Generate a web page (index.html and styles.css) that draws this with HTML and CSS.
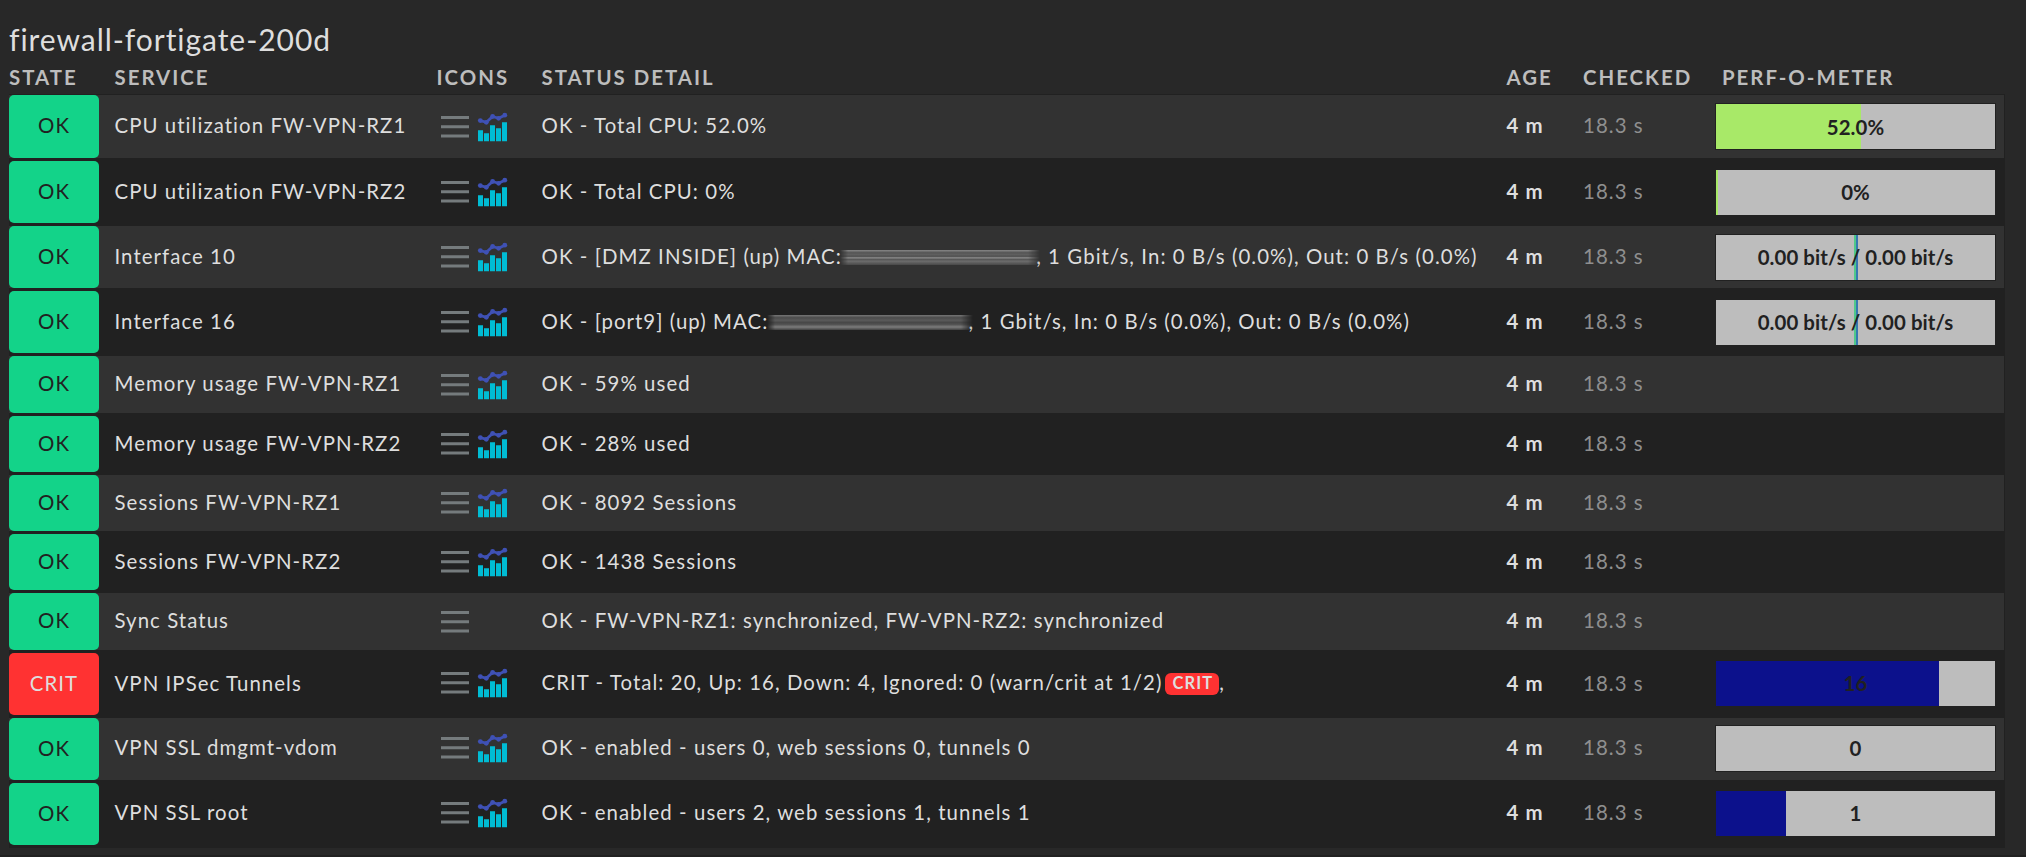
FILE: index.html
```
<!DOCTYPE html>
<html lang="en">
<head>
<meta charset="utf-8">
<title>firewall-fortigate-200d</title>
<link rel="stylesheet" href="styles.css">
</head>
<body>
<svg class="defs" width="0" height="0" aria-hidden="true">
  <symbol id="menu" viewBox="0 0 34 34"><path d="M3 7.5h28M3 16.8h28M3 26h28" stroke="#757b7d" stroke-width="3"/></symbol>
  <symbol id="graph" viewBox="0 0 34 34">
    <path d="M2 20.2h5v11H2zM8 23.2h5v8H8zM14 15.2h5v16h-5zM20 18.2h5v13h-5zM26 12.2h5v19h-5z" fill="#00bcd4"/>
    <path d="M4.3 10.6 10.3 12.3 16.6 6.5 22.6 8.3 28.8 5.2" fill="none" stroke="#3f51b5" stroke-width="2.8"/>
    <g fill="#3f51b5"><circle cx="4.3" cy="10.6" r="2.4"/><circle cx="10.3" cy="12.3" r="2.4"/><circle cx="16.6" cy="6.5" r="2.4"/><circle cx="22.6" cy="8.3" r="2.4"/><circle cx="28.8" cy="5.2" r="2.4"/></g>
  </symbol>
</svg>
<main class="view">
<h1 class="title">firewall-fortigate-200d</h1>
<div class="row head"><span>State</span><span>Service</span><span class="h-icons">Icons</span><span>Status detail</span><span>Age</span><span>Checked</span><span class="h-perf">Perf-O-Meter</span></div>
<div class="table" id="table"></div>
</main>
<script src="app.js"></script>
</body>
</html>
```
FILE: styles.css
```
body { margin: 0; background: #282828; font-family: Lato, "Liberation Sans", sans-serif; font-size: 20.4px; letter-spacing: 1.06px; color: #dedede; }
.defs { position: absolute; }
.view { padding: 19px 21px 0 9px; height: 836px; border-bottom: 2px solid #212121; overflow: hidden; }
.title { margin: 0; font-size: 30px; font-weight: 400; line-height: 40px; letter-spacing: 0.95px; }
.row { display: grid; grid-template-columns: 105.5px 326px 101px 965px 76.5px 132px 281px; align-items: center; white-space: pre; }
.head { height: 35px; font-weight: 700; color: #bdbdbd; text-transform: uppercase; letter-spacing: 2px; }
.h-icons { margin-left: -4px; }
.h-perf { padding-left: 7px; }
.table { border: 1px solid #212121; border-left: 0; border-bottom: 3px solid #212121; width: 1995px; }
.item { height: 62px; border-top: 3px solid #212121; background: #212121; }
.item:first-child { height: 63px; border-top: 0; }
.odd { background: #323232; }
.short { height: 56px; }
.short.tall { height: 57px; }
.text { padding-bottom: 3px; }
.state { box-sizing: border-box; width: 90px; height: 100%; display: flex; align-items: center; justify-content: center; padding-bottom: 3px; border-radius: 5px; background: #13d389; color: #212121; }
.crit .state { background: #ff3232; color: #dedede; }
.icons { display: flex; gap: 4px; margin-left: -2.5px; }
.icons svg { width: 34px; height: 34px; }
.item:nth-child(n+10) .icons, .item:nth-child(n+10) .meter { margin-bottom: 2px; }
.item:nth-child(n+11) .text { padding-bottom: 4px; }
.age { font-weight: 700; }
.checked { color: #8f8f8f; }
.meter { position: relative; height: 45px; border: 1px solid #212121; background: #bdbdbd; color: #212121; display: flex; letter-spacing: 0.07px; }
.meter i { display: block; height: 100%; }
.meter b { position: absolute; inset: 0; display: flex; align-items: center; justify-content: center; font-weight: 700; }
.badge { display: inline-block; margin: 0 0 0 3px; padding: 0 6px 0 7px; height: 22px; line-height: 21px; border-radius: 6px; background: #ff3232; font-size: 16.5px; font-weight: 700; letter-spacing: 1.1px; vertical-align: 1px; }
.smear { display: inline-block; height: 15px; margin: 0 -4px 0 -8px; vertical-align: -1px; filter: blur(0.6px); background: linear-gradient(180deg, #888 0, #555 18%, #606060 32%, #4d4d4d 42%, #8b8b8b 52%, #555 62%, #6c6c6c 75%, #484848 100%); -webkit-mask-image: linear-gradient(90deg, transparent, #000 8px, #000 calc(100% - 12px), transparent); mask-image: linear-gradient(90deg, transparent, #000 8px, #000 calc(100% - 12px), transparent); }
.smear.soft { background: linear-gradient(180deg, #777 0, #4c4c4c 18%, #5a5a5a 35%, #484848 50%, #505050 62%, #7c7c7c 80%, #404040 100%); }
```
FILE: app.js
```
const smear = (w, cls = '') => `<span class="smear ${cls}" style="width:${w}px"></span>`;
const bar = (w, c) => `<i style="width:${w}px;background:${c}"></i>`;
const io = bar(138, 'transparent') + bar(2, '#4fc88a') + bar(2, '#3778b0');
const rows = [
  ['CPU utilization FW-VPN-RZ1', 'OK - Total CPU: 52.0%', bar(145, '#a8e968'), '52.0%'],
  ['CPU utilization FW-VPN-RZ2', 'OK - Total CPU: 0%', bar(2, '#a8e968'), '0%'],
  ['Interface 10', `OK - [DMZ INSIDE] (up) MAC: ${smear(200)}, 1 Gbit/s, In: 0 B/s (0.0%), Out: 0 B/s (0.0%)`, io, '0.00 bit/s / 0.00 bit/s'],
  ['Interface 16', `OK - [port9] (up) MAC: ${smear(206, 'soft')}, 1 Gbit/s, In: 0 B/s (0.0%), Out: 0 B/s (0.0%)`, io, '0.00 bit/s / 0.00 bit/s'],
  ['Memory usage FW-VPN-RZ1', 'OK - 59% used'],
  ['Memory usage FW-VPN-RZ2', 'OK - 28% used'],
  ['Sessions FW-VPN-RZ1', 'OK - 8092 Sessions'],
  ['Sessions FW-VPN-RZ2', 'OK - 1438 Sessions'],
  ['Sync Status', 'OK - FW-VPN-RZ1: synchronized, FW-VPN-RZ2: synchronized'],
  ['VPN IPSec Tunnels', 'CRIT - Total: 20, Up: 16, Down: 4, Ignored: 0 (warn/crit at 1/2)<span class="badge">CRIT</span>,', bar(223, '#0c118c'), '16'],
  ['VPN SSL dmgmt-vdom', 'OK - enabled - users 0, web sessions 0, tunnels 0', ' ', '0'],
  ['VPN SSL root', 'OK - enabled - users 2, web sessions 1, tunnels 1', bar(70, '#0c118c'), '1']
];
document.getElementById('table').innerHTML = rows.map(([name, text, bars, label], n) => {
  const crit = name === 'VPN IPSec Tunnels';
  const cls = ['row', 'item', n % 2 ? 'even' : 'odd', crit ? 'crit' : '', bars ? '' : 'short', n === 4 || n === 8 ? 'tall' : ''].join(' ');
  const graph = name === 'Sync Status' ? '' : '<svg><use href="#graph"/></svg>';
  const meter = bars ? `<div class="meter">${bars}<b>${label}</b></div>` : '';
  return `<div class="${cls}"><span class="state">${crit ? 'CRIT' : 'OK'}</span><span class="text">${name}</span><span class="icons"><svg><use href="#menu"/></svg>${graph}</span><span class="text">${text}</span><span class="text age">4 m</span><span class="text checked">18.3 s</span>${meter}</div>`;
}).join('');
```
